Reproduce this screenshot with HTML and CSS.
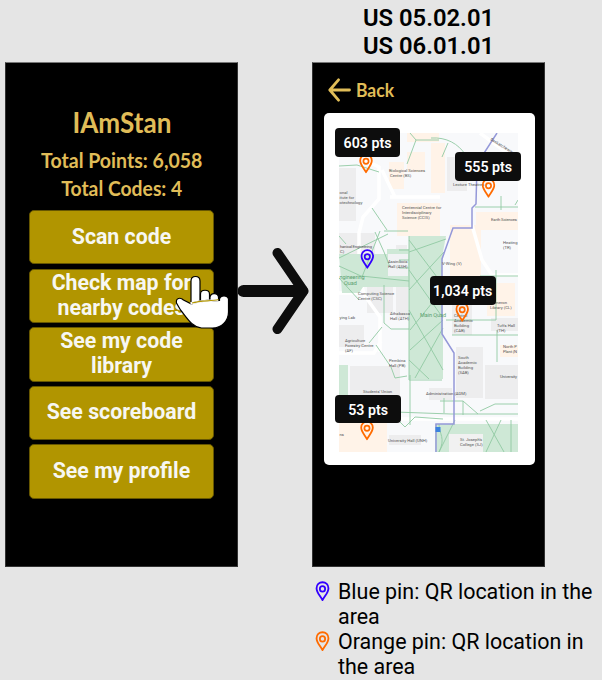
FILE: index.html
```
<!DOCTYPE html>
<html lang="en">
<head>
<meta charset="utf-8">
<title>IAmStan – map flow</title>
<link rel="stylesheet" href="styles.css">
</head>
<body>
<svg class="defs" width="0" height="0" aria-hidden="true">
  <symbol id="pin" viewBox="0 0 14 20.5">
    <path d="M7 1.2C3.7 1.2 1.2 3.8 1.2 7c0 4.300 3.500 7.300 5.800 11.700C9.300 14.300 12.800 11.300 12.800 7 12.800 3.800 10.300 1.200 7 1.200z" fill="none" stroke="currentColor" stroke-width="1.800" stroke-linejoin="round"/>
    <circle cx="7" cy="7.700" r="2.600" fill="none" stroke="currentColor" stroke-width="1.700"/>
  </symbol>
</svg>
<main class="board">
  <h1 class="story">US 05.02.01<br>US 06.01.01</h1>
  <section class="screen menu">
    <h2 class="brand"><span>IAmStan</span></h2>
    <p class="stats"><span class="points">Total Points: 6,058</span><br><span class="codes">Total Codes: 4</span></p>
    <nav class="actions">
      <button>Scan code</button>
      <button>Check map for<br>nearby codes</button>
      <button>See my code<br>library</button>
      <button>See scoreboard</button>
      <button>See my profile</button>
    </nav>
    <svg class="hand" viewBox="175 275 56 56">
      <path d="M191 303V281c0-6 9-6 9 0v20z" fill="#fff" stroke="#000" stroke-width="1.200"/>
      <path d="M200.500 301v-7c0-5 9-5 9 0v6zM210 300v-3c1-5 8-4 8.500 0v4z" fill="#fff" stroke="#000" stroke-width="1.200"/>
      <path d="M191.500 304C202 300 211 301.500 219.500 300.500V299c1-4 8-4 9 0v13c0 9-7 16-16 16h-11c-10-1-15-11-21-18l-4-7c-1-5 4-6 7-3z" fill="#fff" stroke="#000" stroke-width="1.200"/>
      <path d="M190.500 303.500C202 300.500 211 301.500 218 299.500" fill="none" stroke="#fff" stroke-width="2.500"/>
      <path d="M192 303C202 300 211 301.500 218.500 299.500" fill="none" stroke="#b19500" stroke-width="1.200"/>
    </svg>
  </section>
  <svg class="flow" viewBox="0 0 74 90">
    <path class="shaft" d="M5.500 46H64"/>
    <path class="head" d="M39.500 8L65.500 46 39.500 84"/>
  </svg>
  <section class="screen viewer">
    <header class="back">
      <svg viewBox="0 0 24 24"><path d="M10.500 1.800L1.800 12l8.700 10.200M2 12h19.500" fill="none" stroke="#e0bd58" stroke-width="2.800" stroke-linecap="round" stroke-linejoin="round"/></svg>
      <span>Back</span>
    </header>
    <div class="card">
      <svg class="map" viewBox="339 133 179 319">
        <rect x="339" y="133" width="179" height="319" fill="#f8f9fb"/>
        <g fill="#fff3e8">
          <path d="M407 133h32v9h-32zM407 152h18v20h-18zM389 162h15v27h-15zM397 203h43v33h-43zM431 143h14v50h-14zM450 225h31v52h-31zM476 212h42v18h-42zM487 283h28v33h-28zM339 421h48v31h-48zM500 345h18v12h-18z"/>
        </g>
        <g fill="#ededee">
          <path d="M339 168h17v53h-17zM339 233h36v22h-36zM367 287h26v26h-26zM339 325h25v22h-25zM396 245h11v32h-11zM396 287h12v30h-12zM350 366h50v32h-50zM447 157h20v34h-20zM452 305h20v30h-20zM456 347h27v51h-27zM491 318h27v13h-27zM485 365h33v34h-33zM389 435h32v10h-32zM429 388h23v12h-23z"/>
        </g>
        <g fill="none" stroke="#fff" stroke-width="3.500">
          <path d="M365 160l14 7v32l-16 18-4 16v45l6 18 15 21v35M339 293h22M480 133l38 28M339 353h35l7-12M472 225l10 35 10 15h26M339 419h179M390 197h50M382 170l13 27"/>
        </g>
        <g fill="#cee8d6">
          <path d="M339 254h48v-5h22v38h-46l-4 6h-17zM409 236h37l-3 16-2 38 2 20v69h-34zM339 365h9v34h-9zM435 424h83v28h-83z"/>
        </g>
        <path d="M388 254h20v22h-20z" fill="#f1f2f4"/>
        <path d="M449 434h34v18h-34z" fill="#f1f1f1"/>
        <g fill="none" stroke="#91c9a3" stroke-width=".9">
          <path d="M339 166l18-1 22 7M410 133l6 7-9 24M416 140h23M431 138c16-1 27 6 34 16M442 157l6-14M372 208l15 22M339 258l49-24M362 277l18-46M339 266l22 10 48 5M375 232l9 20 6 15M384 231h24M339 236l7 8M409 236v144h33M409 252l37-13M409 290l35-38M410 330l31-38M410 350l33-30M415 378l28-50M409 240l34 45M409 270l34 48M409 310l34 60M409 360l20 19M399 250h10M399 260h10M399 268h10M384 285v38l7 6h18M382 327l-13 16M376 345l15 22 4 11 12-2M339 278l20 22M496 270v50h-50M480 276h38M452 335h66M497 330v32M444 398v15M440 401h23l15 13M463 401v14M480 411l15-7h23M339 410l112 4h67M398 420l7 7 10-10 28 2M410 375v50M475 207h43M501 196v14M515 205l3-5M486 420l18 32M501 420l-15 32M511 420v32M439 424c0 10 7 14 0 28M455 420l-16 32"/>
        </g>
        <path d="M497 133l-20 31-1 40-4 4v20h-19l-11 31v75l12 19v71h-18v28" fill="none" stroke="#9498d9" stroke-width="1.500"/>
        <rect x="435.500" y="427" width="5" height="5" fill="#3c82df"/>
        <g class="places">
          <text x="389" y="172">Biological Sciences</text><text x="390" y="177">Centre (BS)</text>
          <text x="339.500" y="194">onal</text><text x="339.500" y="199">itute for</text><text x="339.500" y="204">otechnology</text>
          <text x="402" y="209">Centennial Centre for</text><text x="402" y="214">Interdisciplinary</text><text x="402" y="219">Science (CCIS)</text>
          <text x="453" y="186">Lecture Theatres</text><text x="491" y="221" textLength="26">Earth Sciences</text>
          <text x="490" y="140" transform="rotate(32 490 140)">Saskatchewan</text>
          <text x="340" y="248" textLength="32">hanical Engineering</text><text x="340" y="253">C)</text>
          <text x="388" y="263">Assiniboia</text><text x="388" y="268">Hall (ASH)</text>
          <text x="358" y="295">Computing Science</text><text x="358" y="300">Centre (CSC)</text>
          <text x="390" y="315">Athabasca</text><text x="390" y="320">Hall (ATH)</text><text x="339.500" y="319">ying Lab</text>
          <text x="345" y="342">Agriculture</text><text x="345" y="347">Forestry Centre</text><text x="345" y="352">(AF)</text>
          <text x="389" y="362">Pembina</text><text x="389" y="367">Hall (PB)</text>
          <text x="363" y="393">Students' Union</text><text x="426" y="395">Administration (ADM)</text>
          <text x="388" y="442">University Hall (UNH)</text><text x="339.500" y="436">ns</text>
          <text x="442" y="265">V-Wing (V)</text><text x="503" y="244">Heating</text><text x="503" y="249">(TR)</text>
          <text x="490" y="304">Cameron</text><text x="490" y="309">Library (CL)</text><text x="497" y="327">Tuffs Hall</text><text x="497" y="332">(TH)</text>
          <text x="454" y="317">Central</text><text x="454" y="322">Academic</text><text x="454" y="327">Building</text><text x="454" y="332">(CAB)</text>
          <text x="458" y="359">South</text><text x="458" y="364">Academic</text><text x="458" y="369">Building</text><text x="458" y="374">(SAB)</text>
          <text x="503" y="348" textLength="14">North P</text><text x="503" y="353" textLength="14">Plant (N</text><text x="500" y="378" textLength="17">University</text>
          <text x="460" y="441">St. Joseph's</text><text x="460" y="446">College (SJ)</text>
        </g>
        <g class="greens"><text x="339.500" y="279" textLength="25">ngineering</text><text x="344" y="285">Quad</text><text x="420" y="317" textLength="26">Main Quad</text></g>
        <use class="orange" href="#pin" x="359" y="153.500" width="14" height="20.500"/>
        <use class="orange" href="#pin" x="481.500" y="178" width="14" height="20.500"/>
        <use class="blue" href="#pin" x="360.300" y="249" width="14" height="20.500"/>
        <use class="orange" href="#pin" x="455.200" y="302" width="14" height="20.500"/>
        <use class="orange" href="#pin" x="360" y="420.500" width="14" height="20.500"/>
      </svg>
      <span class="tag tag-603">603 pts</span>
      <span class="tag tag-555">555 pts</span>
      <span class="tag tag-1034">1,034 pts</span>
      <span class="tag tag-53">53 pts</span>
    </div>
  </section>
  <ul class="legend">
    <li><svg class="blue"><use href="#pin"/></svg><span>Blue pin: QR location in the<br>area</span></li>
    <li><svg class="orange"><use href="#pin"/></svg><span>Orange pin: QR location in<br>the area</span></li>
  </ul>
</main>
</body>
</html>
```
FILE: styles.css
```
* { box-sizing: border-box; margin: 0; padding: 0; }
body { width: 602px; height: 680px; overflow: hidden; background: #e5e5e5; font-family: Roboto, sans-serif; color: #000; }
.defs { position: absolute; }
.board { display: grid; grid-template-columns: 233px 74px 233px 1fr; grid-template-rows: 62px 505px 113px; padding-left: 5px; height: 680px; }
.story { grid-column: 3; grid-row: 1; padding-top: 3.500px; text-align: center; font-size: 23.800px; line-height: 28px; font-weight: 600; white-space: nowrap; }
.screen { grid-row: 2; position: relative; background: #000; border: 1px solid #333; border-top-color: #777; }
.menu { grid-column: 1; color: #e0bd58; text-align: center; font-family: Lato, sans-serif; font-weight: 700; padding-top: 42px; }
.brand { font-size: 29px; line-height: 34px; height: 41px; font-weight: 700; }
.brand span, .stats span, .back span { display: inline-block; white-space: nowrap; }
.brand span { transform: scaleX(.9); }
.stats { font-size: 21px; line-height: 28px; height: 64px; }
.points { transform: scaleX(.93); }
.codes { transform: scaleX(.92); }
.actions { display: flex; flex-direction: column; gap: 4.200px; width: 185px; margin: 0 auto; }
.actions button { height: 54.400px; padding-bottom: 2px; border: 1px solid #665600; border-radius: 5px; background: #b19500; color: #f7f7f2; font: 700 21.300px/25px Roboto, sans-serif; white-space: nowrap; }
.hand { position: absolute; left: 169px; top: 212px; width: 56px; height: 56px; }
.flow { grid-column: 2; grid-row: 2; width: 74px; height: 90px; margin-top: 183px; z-index: 2; position: relative; }
.flow path { fill: none; stroke: #0d0d0d; stroke-linecap: round; stroke-linejoin: round; }
.shaft { stroke-width: 12px; }
.head { stroke-width: 10px; }
.viewer { grid-column: 3; padding: 9px 10px 0 11px; }
.back { display: flex; align-items: center; height: 36px; padding-left: 4px; gap: 4px; margin-bottom: 5px; color: #e0bd58; font: 700 19px/26px Lato, sans-serif; }
.back svg { width: 24px; height: 24px; }
.back span { transform: scaleX(.92); transform-origin: left; }
.card { position: relative; width: 211px; height: 352px; padding: 20px 15px; border-radius: 5px; background: #fff; }
.map { display: block; width: 179px; height: 319px; }
.places text { font: 4.200px Roboto, sans-serif; fill: #555; }
.greens text { font: 5.500px Roboto, sans-serif; fill: #5aa06f; }
.tag { position: absolute; width: 65.500px; height: 28.500px; border-radius: 4px; background: #0d0d0d; color: #fff; font-size: 14.200px; line-height: 31px; font-weight: 600; text-align: center; }
.tag-603 { left: 10.800px; top: 15px; }
.tag-555 { left: 131.400px; top: 39px; }
.tag-1034 { left: 106px; top: 163px; }
.tag-53 { left: 11.400px; top: 281.700px; }
.legend { grid-column: 3 / 5; grid-row: 3; list-style: none; padding: 12px 0 0 3px; font-size: 21.450px; line-height: 25px; }
.legend li { display: flex; gap: 8px; height: 50px; white-space: nowrap; }
.legend svg { width: 15px; height: 21px; margin-top: 2px; flex: none; }
.blue { color: #3300ff; }
.orange { color: #ff6b00; }
```
